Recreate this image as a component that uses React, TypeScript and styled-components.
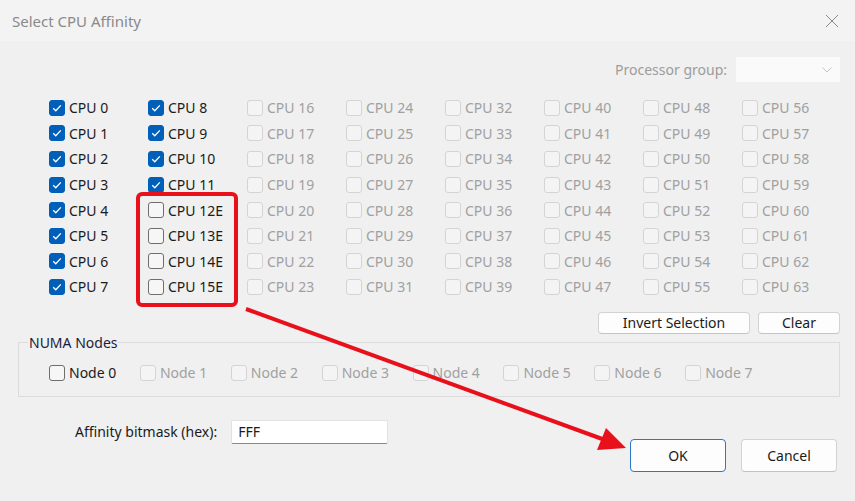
import styled, { createGlobalStyle } from "styled-components";

const GlobalStyle = createGlobalStyle`
  html, body {
    margin: 0;
    padding: 0;
    background: #f0f0f0;
  }

  body {
    font-family: "Noto Sans", "Open Sans", sans-serif;
    font-size: 14px;
    color: #1b1b1b;
  }
`;

const Window = styled.div`
  position: relative;
  display: flex;
  flex-direction: column;
  width: 855px;
  height: 501px;
  overflow: hidden;
  background: #f0f0f0;
`;

const TitleBar = styled.div`
  display: flex;
  align-items: center;
  justify-content: space-between;
  height: 41px;
  padding: 0 16px 0 12px;
  background: #f3f3f3;
  color: #8a8a8a;
  font-size: 15px;
`;

const Body = styled.div`
  display: flex;
  flex-direction: column;
  padding: 16px 15px 0 16px;
`;

const ProcessorRow = styled.div`
  display: flex;
  justify-content: flex-end;
  align-items: center;
  gap: 9px;
  height: 25px;
  color: #9c9c9c;
`;

const Combo = styled.div`
  display: flex;
  align-items: center;
  justify-content: flex-end;
  width: 104px;
  height: 25px;
  padding-right: 8px;
  box-sizing: border-box;
  background: #fafafa;
`;

const CpuGrid = styled.div`
  display: grid;
  grid-template-rows: repeat(8, 25.6px);
  grid-auto-flow: column;
  grid-auto-columns: 99px;
  margin-top: 13px;
  padding-left: 33px;
`;

const Item = styled.label<{ $disabled?: boolean }>`
  display: flex;
  align-items: center;
  gap: 4px;
  white-space: nowrap;
  color: ${(p) => (p.$disabled ? "#a0a0a0" : "#1b1b1b")};
`;

const Box = styled.span<{ $checked?: boolean; $disabled?: boolean }>`
  display: inline-flex;
  align-items: center;
  justify-content: center;
  width: 16px;
  height: 16px;
  box-sizing: border-box;
  border-radius: 3px;
  flex: none;
  background: ${(p) => (p.$checked ? "#005fb8" : p.$disabled ? "#f4f4f4" : "#f6f6f6")};
  border: 1px solid
    ${(p) => (p.$checked ? "#005fb8" : p.$disabled ? "#d4d4d4" : "#6e6e6e")};
`;

const ActionRow = styled.div`
  display: flex;
  justify-content: flex-end;
  gap: 8px;
  margin-top: 12px;
`;

const SmallButton = styled.button<{ $w: number }>`
  width: ${(p) => p.$w}px;
  height: 22px;
  padding: 0;
  font-family: inherit;
  font-size: 14px;
  color: #1b1b1b;
  background: #fdfdfd;
  border: 1px solid #d3d3d3;
  border-bottom-color: #c4c4c4;
  border-radius: 4px;
`;

const NumaGroup = styled.fieldset`
  margin: 0 0 0 2px;
  padding: 0 0 13px 9px;
  border: 1px solid #dcdcdc;
  min-width: 0;
`;

const Legend = styled.legend`
  padding: 0 1px;
  line-height: 18px;
  color: #1c1c3c;
`;

const NodeRow = styled.div`
  display: grid;
  grid-template-columns: repeat(8, 90.9px);
  height: 20px;
  margin: 11px 0 0 21px;
`;

const BottomRow = styled.div`
  display: flex;
  justify-content: space-between;
  align-items: flex-start;
  margin-top: 23px;
`;

const BitmaskField = styled.div`
  display: flex;
  align-items: center;
  gap: 14px;
  margin-left: 59px;
  height: 24px;
`;

const Input = styled.div`
  display: flex;
  align-items: center;
  width: 157px;
  height: 24px;
  box-sizing: border-box;
  padding-left: 6px;
  background: #ffffff;
  border: 1px solid #e2e2e2;
  border-bottom-color: #8a8a8a;
  border-radius: 2px;
`;

const Footer = styled.div`
  display: flex;
  gap: 15px;
  margin: 19px 3px 0 0;
`;

const DialogButton = styled.button<{ $primary?: boolean }>`
  width: 96px;
  height: 33px;
  padding: 0;
  font-family: inherit;
  font-size: 14px;
  color: #1b1b1b;
  background: #fdfdfd;
  border: 1px solid ${(p) => (p.$primary ? "#2a78c6" : "#d3d3d3")};
  border-bottom-color: ${(p) => (p.$primary ? "#2a78c6" : "#c2c2c2")};
  border-radius: 4px;
`;

const Highlight = styled.div`
  position: absolute;
  left: 136px;
  top: 192px;
  width: 102px;
  height: 115px;
  box-sizing: border-box;
  border: 4px solid #e8111b;
  border-radius: 6px;
  pointer-events: none;
`;

const ArrowLayer = styled.svg`
  position: absolute;
  inset: 0;
  pointer-events: none;
`;

const Check = () => (
  <svg width="12" height="12" viewBox="0 0 12 12">
    <path d="M2.2 6.3 L4.8 8.8 L9.8 3.4" fill="none" stroke="#fff" strokeWidth="1.3" />
  </svg>
);

type BoxProps = { label: string; checked?: boolean; disabled?: boolean };

const CheckItem = ({ label, checked, disabled }: BoxProps) => (
  <Item $disabled={disabled}>
    <Box $checked={checked} $disabled={disabled}>
      {checked && <Check />}
    </Box>
    {label}
  </Item>
);

const cpus = Array.from({ length: 64 }, (_, i) => {
  if (i < 12) return { label: `CPU ${i}`, checked: true };
  if (i < 16) return { label: `CPU ${i}E` };
  return { label: `CPU ${i}`, disabled: true };
});

export default function App() {
  return (
    <Window>
      <GlobalStyle />
      <TitleBar>
        <span>Select CPU Affinity</span>
        <svg width="14" height="14" viewBox="0 0 14 14">
          <path d="M1 1 L13 13 M13 1 L1 13" stroke="#8a8a8a" strokeWidth="1" />
        </svg>
      </TitleBar>
      <Body>
        <ProcessorRow>
          <span>Processor group:</span>
          <Combo>
            <svg width="10" height="6" viewBox="0 0 10 6">
              <path d="M0.5 0.5 L5 5 L9.5 0.5" fill="none" stroke="#c4c4c4" strokeWidth="1" />
            </svg>
          </Combo>
        </ProcessorRow>

        <CpuGrid>
          {cpus.map((c) => (
            <CheckItem key={c.label} {...c} />
          ))}
        </CpuGrid>

        <ActionRow>
          <SmallButton $w={152}>Invert Selection</SmallButton>
          <SmallButton $w={82}>Clear</SmallButton>
        </ActionRow>

        <NumaGroup>
          <Legend>NUMA Nodes</Legend>
          <NodeRow>
            {Array.from({ length: 8 }, (_, i) => (
              <CheckItem key={i} label={`Node ${i}`} disabled={i > 0} />
            ))}
          </NodeRow>
        </NumaGroup>

        <BottomRow>
          <BitmaskField>
            <span>Affinity bitmask (hex):</span>
            <Input>FFF</Input>
          </BitmaskField>
          <Footer>
            <DialogButton $primary>OK</DialogButton>
            <DialogButton>Cancel</DialogButton>
          </Footer>
        </BottomRow>
      </Body>

      <Highlight />
      <ArrowLayer width="855" height="501" viewBox="0 0 855 501">
        <line x1="246" y1="309" x2="605" y2="440" stroke="#e8111b" strokeWidth="4" />
        <polygon points="626,448 597,450 606,428" fill="#e8111b" />
      </ArrowLayer>
    </Window>
  );
}
